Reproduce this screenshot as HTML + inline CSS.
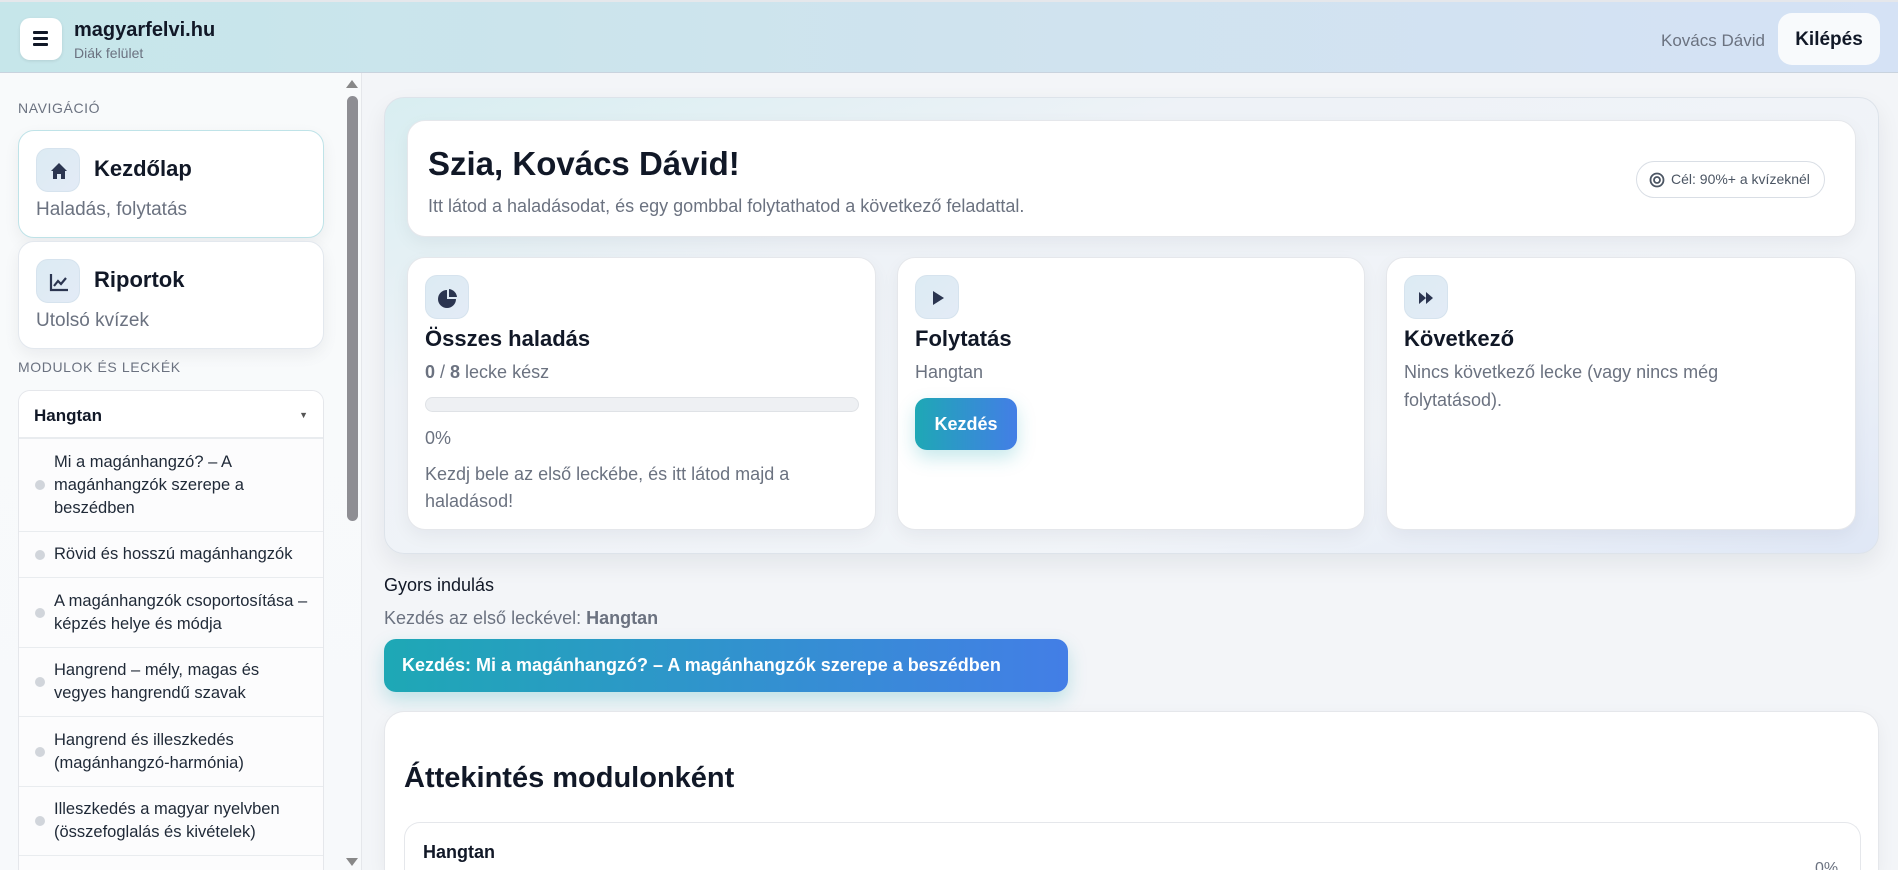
<!DOCTYPE html>
<html style="overflow:hidden;height:870px"><head><meta charset="utf-8"><style>
*{box-sizing:border-box;margin:0;padding:0}
body{width:1898px;height:870px;overflow:hidden;font-family:"Liberation Sans",sans-serif;background:#f3f5f8;color:#111827;position:relative}
.abs{position:absolute}
header{position:absolute;left:0;top:0;width:1898px;height:73px;background:linear-gradient(90deg,#c6e6ea 0%,#cfe3ee 50%,#d5e2f5 100%);border-bottom:1px solid #c9d3de;border-top:2px solid #e5e7eb}
.burger{left:20px;top:16px;width:42px;height:42px;background:#fff;border-radius:10px;box-shadow:0 1px 3px rgba(0,0,0,.1)}
.burger i{position:absolute;left:13px;width:15px;height:2.5px;background:#111827;border-radius:1px}
.side{left:0;top:73px;width:362px;height:797px;background:linear-gradient(180deg,#f8fafb,#f7f9fb);border-right:1px solid #e5e7eb;overflow:hidden}
.lbl{font-size:14px;letter-spacing:.6px;color:#6b7280}
.navc{position:absolute;left:18px;width:306px;height:108px;background:#fff;border-radius:16px;border:1px solid #e3e8ee;box-shadow:0 6px 16px rgba(15,23,42,.06)}
.ic{position:absolute;width:44px;height:44px;border-radius:12px;background:linear-gradient(135deg,#dcebf3,#e3ebf6);border:1px solid #d6e3ee}
.navc .ic{left:17px;top:17px}
.navc b{position:absolute;left:75px;top:25px;font-size:22px}
.navc span{position:absolute;left:17px;top:68px;font-size:19px;color:#6b7280}
.mod{left:18px;width:306px;height:480px;background:#fcfcfd;border:1px solid #e5e7eb;border-bottom:none;border-radius:12px 12px 0 0;overflow:hidden}
.mod .h{height:48px;background:#fff;border-bottom:2px solid #e9ecef;font-weight:bold;font-size:17px;padding:15px 15px}
.it{position:relative;border-bottom:1px solid #e9ecef;padding:0 10px 0 35px;font-size:16.5px;line-height:23px;color:#1f2937;display:flex;align-items:center}
.it:before{content:"";position:absolute;left:16px;top:50%;margin-top:-5px;width:10px;height:10px;border-radius:50%;background:#d1d5db}
.card{position:absolute;background:#fff;border:1px solid #e5e7eb;border-radius:18px;box-shadow:0 6px 18px rgba(15,23,42,.05)}
.card .ic{left:17px;top:17px}
.card h3{position:absolute;left:17px;top:68px;font-size:22px}
.card p{position:absolute;left:17px;font-size:18px;color:#6b7280;line-height:28px}
.btn{position:absolute;background:linear-gradient(90deg,#1ea8b5,#437ee6);color:#fff;font-weight:bold;border-radius:12px;box-shadow:0 8px 18px rgba(30,168,181,.25)}
</style></head><body>
<header>
 <div class="abs burger"><i style="top:13px"></i><i style="top:19px"></i><i style="top:25px"></i></div>
 <div class="abs" style="left:74px;top:17px;font-size:20px;font-weight:bold">magyarfelvi.hu</div>
 <div class="abs" style="left:74px;top:43px;font-size:14px;color:#6b7280">Diák felület</div>
 <div class="abs" style="left:1661px;top:29px;font-size:17px;color:#6b7280">Kovács Dávid</div>
 <div class="abs" style="left:1778px;top:11px;width:102px;height:52px;background:#f8fafc;border-radius:14px;font-weight:bold;font-size:19px;text-align:center;line-height:54px">Kilépés</div>
</header>
<div class="abs side">
 <div class="abs lbl" style="left:18px;top:27px">NAVIGÁCIÓ</div>
 <div class="navc" style="top:57px;border-color:#bfe3e8">
  <div class="ic"><svg width="44" height="44" viewBox="0 0 44 44"><path d="M14 22 L22 14 L30 22 L28 22 L28 30 L24 30 L24 25 L20 25 L20 30 L16 30 L16 22Z" fill="#2b3550"/></svg></div>
  <b>Kezdőlap</b><span>Haladás, folytatás</span></div>
 <div class="navc" style="top:168px">
  <div class="ic"><svg width="44" height="44" viewBox="0 0 44 44" fill="none" stroke="#2b3550" stroke-width="2.2"><path d="M14 14 V30 H31"/><path d="M17 26 L21 21 L24 24 L29 18"/></svg></div>
  <b>Riportok</b><span>Utolsó kvízek</span></div>
 <div class="abs lbl" style="left:18px;top:286px">MODULOK ÉS LECKÉK</div>
 <div class="abs mod" style="top:317px">
  <div class="h">Hangtan<span style="float:right;font-size:9px;color:#555;margin-top:4px">▼</span></div>
  <div class="it" style="height:93px">Mi a magánhangzó? – A magánhangzók szerepe a beszédben</div>
  <div class="it" style="height:46px">Rövid és hosszú magánhangzók</div>
  <div class="it" style="height:70px">A magánhangzók csoportosítása – képzés helye és módja</div>
  <div class="it" style="height:69px">Hangrend – mély, magas és vegyes hangrendű szavak</div>
  <div class="it" style="height:70px">Hangrend és illeszkedés (magánhangzó-harmónia)</div>
  <div class="it" style="height:69px">Illeszkedés a magyar nyelvben (összefoglalás és kivételek)</div>
 </div>
</div>
<div class="abs" style="left:346px;top:80px;width:0;height:0;border-left:6px solid transparent;border-right:6px solid transparent;border-bottom:8px solid #888"></div>
<div class="abs" style="left:347px;top:96px;width:11px;height:425px;background:#8e8e93;border-radius:6px"></div>
<div class="abs" style="left:346px;top:858px;width:0;height:0;border-left:6px solid transparent;border-right:6px solid transparent;border-top:8px solid #888"></div>

<div class="abs" style="left:384px;top:97px;width:1495px;height:457px;border-radius:20px;background:linear-gradient(160deg,#d8eef1 0%,#eef2f7 30%,#f1f4f8 70%,#dfe7f6 100%);border:1px solid #dde3ea;box-shadow:0 10px 24px rgba(15,23,42,.07)"></div>
<div class="card" style="left:407px;top:120px;width:1449px;height:117px">
 <div class="abs" style="left:20px;top:24px;font-size:33px;font-weight:bold">Szia, Kovács Dávid!</div>
 <div class="abs" style="left:20px;top:75px;font-size:18px;color:#6b7280">Itt látod a haladásodat, és egy gombbal folytathatod a következő feladattal.</div>
 <div class="abs" style="left:1228px;top:40px;width:189px;height:37px;border:1px solid #d9dee5;border-radius:19px;font-size:14px;color:#4b5563;line-height:35px;padding-left:34px">Cél: 90%+ a kvízeknél
  <svg class="abs" style="left:12px;top:10px" width="16" height="16" viewBox="0 0 16 16" fill="none" stroke="#4b5563" stroke-width="1.8"><circle cx="8" cy="8" r="6.5"/><circle cx="8" cy="8" r="3"/></svg></div>
</div>
<div class="card" style="left:407px;top:257px;width:469px;height:273px">
 <div class="ic"><svg width="44" height="44" viewBox="0 0 44 44"><path d="M21 14 A9 9 0 1 0 30 23 L21 23Z" fill="#2b3550"/><path d="M23 13 A9 9 0 0 1 31 21 L23 21Z" fill="#2b3550"/></svg></div>
 <h3>Összes haladás</h3>
 <p style="top:100px"><b>0</b> / <b>8</b> lecke kész</p>
 <div class="abs" style="left:17px;top:139px;width:434px;height:15px;border-radius:8px;background:#eef0f3;border:1px solid #dfe2e6"></div>
 <p style="top:166px">0%</p>
 <p style="top:203px;width:430px;line-height:27px">Kezdj bele az első leckébe, és itt látod majd a haladásod!</p>
</div>
<div class="card" style="left:897px;top:257px;width:468px;height:273px">
 <div class="ic"><svg width="44" height="44" viewBox="0 0 44 44"><path d="M17 15 L28 22 L17 29Z" fill="#2b3550"/></svg></div>
 <h3>Folytatás</h3>
 <p style="top:100px">Hangtan</p>
 <div class="btn" style="left:17px;top:140px;width:102px;height:52px;font-size:18px;text-align:center;line-height:52px">Kezdés</div>
</div>
<div class="card" style="left:1386px;top:257px;width:470px;height:273px">
 <div class="ic"><svg width="44" height="44" viewBox="0 0 44 44"><path d="M14 16 L21 22 L14 28Z M21 16 L28 22 L21 28Z" fill="#2b3550"/></svg></div>
 <h3>Következő</h3>
 <p style="top:100px;width:400px">Nincs következő lecke (vagy nincs még folytatásod).</p>
</div>
<div class="abs" style="left:384px;top:575px;font-size:18px;color:#111827">Gyors indulás</div>
<div class="abs" style="left:384px;top:608px;font-size:18px;color:#6b7280">Kezdés az első leckével: <b>Hangtan</b></div>
<div class="btn" style="left:384px;top:639px;width:684px;height:53px;font-size:18px;line-height:53px;padding-left:18px">Kezdés: Mi a magánhangzó? – A magánhangzók szerepe a beszédben</div>
<div class="abs" style="left:384px;top:711px;width:1495px;height:159px;background:#fff;border:1px solid #e5e7eb;border-bottom:none;border-radius:20px 20px 0 0;box-shadow:0 6px 18px rgba(15,23,42,.05)">
 <div class="abs" style="left:19px;top:50px;font-size:29px;font-weight:bold">Áttekintés modulonként</div>
 <div class="abs" style="left:19px;top:110px;width:1457px;height:48px;border:1px solid #e5e7eb;border-bottom:none;border-radius:16px 16px 0 0;background:#fff;overflow:hidden">
  <div class="abs" style="left:18px;top:19px;font-size:18px;font-weight:bold">Hangtan</div>
  <div class="abs" style="left:1410px;top:37px;font-size:16px;color:#6b7280">0%</div>
 </div>
</div>
</body></html>
